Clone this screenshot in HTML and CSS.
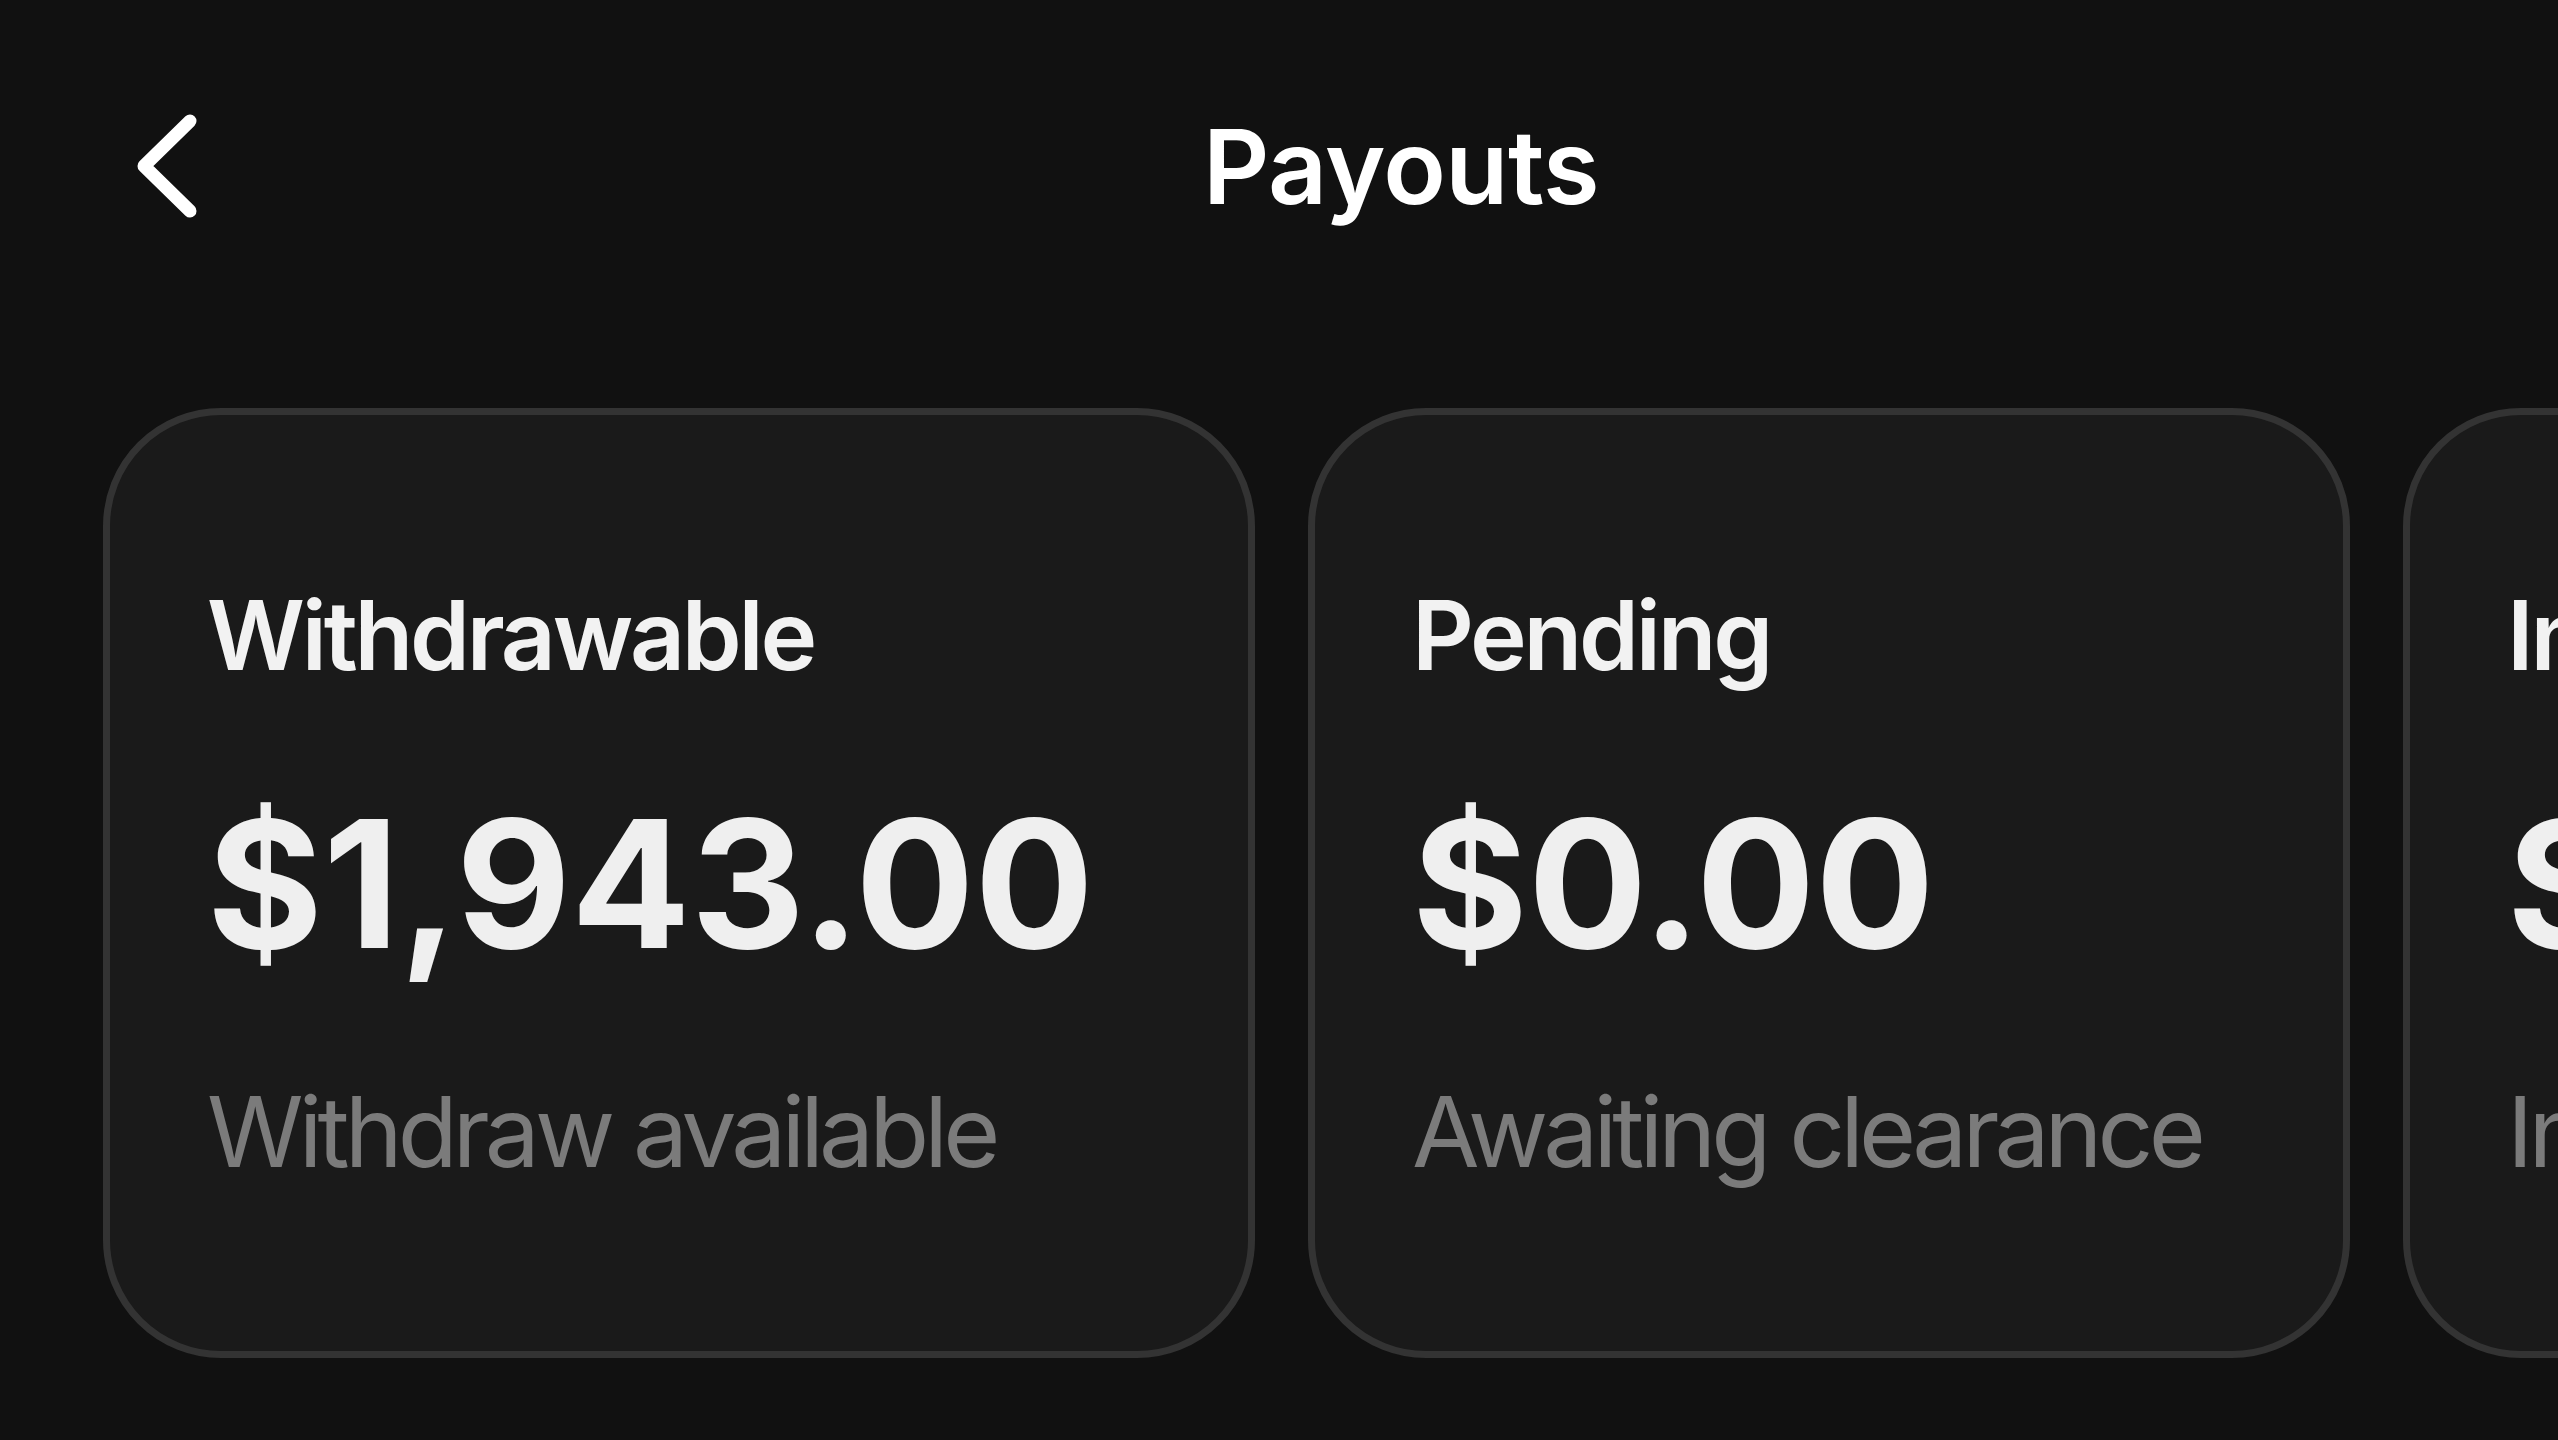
FILE: index.html
```html
<!DOCTYPE html>
<html lang="en">
<head>
<meta charset="utf-8">
<title>Payouts</title>
<link rel="stylesheet" href="styles.css">
</head>
<body>
<header class="topbar">
  <div class="back">
    <svg class="back-icon" width="80" height="110" viewBox="0 0 80 110">
      <polyline points="62,10 16,55 62,100" fill="none" stroke="#ffffff" stroke-width="13" stroke-linecap="round" stroke-linejoin="round"/>
    </svg>
  </div>
  <h1 class="title">Payouts</h1>
</header>
<main class="cards">
  <section class="card card-wide">
    <div class="card-label">Withdrawable</div>
    <div class="card-amount">$1,943.00</div>
    <div class="card-note">Withdraw available</div>
  </section>
  <section class="card card-mid">
    <div class="card-label">Pending</div>
    <div class="card-amount">$0.00</div>
    <div class="card-note">Awaiting clearance</div>
  </section>
  <section class="card card-mid">
    <div class="card-label">In Transit</div>
    <div class="card-amount">$0.00</div>
    <div class="card-note">In transit to your bank</div>
  </section>
</main>
</body>
</html>
```

FILE: styles.css
```css
html, body {
  margin: 0;
  padding: 0;
  background: #111111;
}
body {
  width: 2558px;
  height: 1440px;
  overflow: hidden;
  font-family: "Inter", "Liberation Sans", sans-serif;
  color: #f2f2f2;
}
.topbar {
  display: flex;
  align-items: center;
  height: 332px;
  padding: 0 16px 0 128px;
  box-sizing: border-box;
}
.back {
  width: 132px;
  flex-shrink: 0;
  display: flex;
  align-items: center;
}
.back-icon {
  display: block;
}
.title {
  flex: 1;
  margin: 0;
  text-align: center;
  font-size: 103px;
  line-height: 1;
  font-weight: 600;
  color: #ffffff;
  letter-spacing: -0.5px;
}
.cards {
  display: flex;
  gap: 53px;
  margin-top: 76px;
  padding-left: 103px;
  overflow: hidden;
}
.card {
  flex-shrink: 0;
  box-sizing: border-box;
  height: 950px;
  background: #1a1a1a;
  border: 7px solid #333333;
  border-radius: 118px;
  padding: 172px 0 0 97px;
  display: flex;
  flex-direction: column;
}
.card-wide {
  width: 1152px;
}
.card-mid {
  width: 1042px;
}
.card-label {
  font-size: 96px;
  line-height: 1;
  font-weight: 600;
  color: #f2f2f2;
  letter-spacing: -3.2px;
  white-space: nowrap;
}
.card-amount {
  margin-top: 113px;
  font-size: 177px;
  line-height: 1;
  font-weight: 700;
  color: #efefef;
  white-space: nowrap;
}
.card-note {
  margin-top: 110px;
  font-size: 98px;
  line-height: 1;
  font-weight: 400;
  color: #7b7b7b;
  letter-spacing: -4.9px;
  white-space: nowrap;
}
```
